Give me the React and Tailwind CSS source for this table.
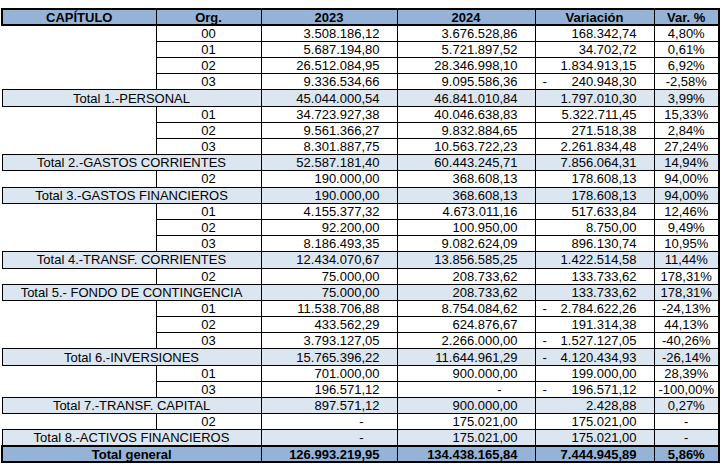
const rows = [
  { org: "00", v23: "3.508.186,12", v24: "3.676.528,86", dif: "168.342,74", pct: "4,80%" },
  { org: "01", v23: "5.687.194,80", v24: "5.721.897,52", dif: "34.702,72", pct: "0,61%" },
  { org: "02", v23: "26.512.084,95", v24: "28.346.998,10", dif: "1.834.913,15", pct: "6,92%" },
  { org: "03", v23: "9.336.534,66", v24: "9.095.586,36", dif: "-240.948,30", pct: "-2,58%" },
  { total: "Total 1.-PERSONAL", v23: "45.044.000,54", v24: "46.841.010,84", dif: "1.797.010,30", pct: "3,99%" },
  { org: "01", v23: "34.723.927,38", v24: "40.046.638,83", dif: "5.322.711,45", pct: "15,33%" },
  { org: "02", v23: "9.561.366,27", v24: "9.832.884,65", dif: "271.518,38", pct: "2,84%" },
  { org: "03", v23: "8.301.887,75", v24: "10.563.722,23", dif: "2.261.834,48", pct: "27,24%" },
  { total: "Total 2.-GASTOS CORRIENTES", v23: "52.587.181,40", v24: "60.443.245,71", dif: "7.856.064,31", pct: "14,94%" },
  { org: "02", v23: "190.000,00", v24: "368.608,13", dif: "178.608,13", pct: "94,00%" },
  { total: "Total 3.-GASTOS FINANCIEROS", v23: "190.000,00", v24: "368.608,13", dif: "178.608,13", pct: "94,00%" },
  { org: "01", v23: "4.155.377,32", v24: "4.673.011,16", dif: "517.633,84", pct: "12,46%" },
  { org: "02", v23: "92.200,00", v24: "100.950,00", dif: "8.750,00", pct: "9,49%" },
  { org: "03", v23: "8.186.493,35", v24: "9.082.624,09", dif: "896.130,74", pct: "10,95%" },
  { total: "Total 4.-TRANSF. CORRIENTES", v23: "12.434.070,67", v24: "13.856.585,25", dif: "1.422.514,58", pct: "11,44%" },
  { org: "02", v23: "75.000,00", v24: "208.733,62", dif: "133.733,62", pct: "178,31%" },
  { total: "Total 5.- FONDO DE CONTINGENCIA", v23: "75.000,00", v24: "208.733,62", dif: "133.733,62", pct: "178,31%" },
  { org: "01", v23: "11.538.706,88", v24: "8.754.084,62", dif: "-2.784.622,26", pct: "-24,13%" },
  { org: "02", v23: "433.562,29", v24: "624.876,67", dif: "191.314,38", pct: "44,13%" },
  { org: "03", v23: "3.793.127,05", v24: "2.266.000,00", dif: "-1.527.127,05", pct: "-40,26%" },
  { total: "Total 6.-INVERSIONES", v23: "15.765.396,22", v24: "11.644.961,29", dif: "-4.120.434,93", pct: "-26,14%" },
  { org: "01", v23: "701.000,00", v24: "900.000,00", dif: "199.000,00", pct: "28,39%" },
  { org: "03", v23: "196.571,12", v24: "-", dif: "-196.571,12", pct: "-100,00%" },
  { total: "Total 7.-TRANSF. CAPITAL", v23: "897.571,12", v24: "900.000,00", dif: "2.428,88", pct: "0,27%" },
  { org: "02", v23: "-", v24: "175.021,00", dif: "175.021,00", pct: "-" },
  { total: "Total 8.-ACTIVOS FINANCIEROS", v23: "-", v24: "175.021,00", dif: "175.021,00", pct: "-" },
];

const Amount = ({ value, className = "" }) => {
  if (value === "-") {
    return <td className={`border border-black text-right pr-[33px] ${className}`}>-</td>;
  }
  return <td className={`border border-black text-right pr-[17px] ${className}`}>{value}</td>;
};

const Diff = ({ value, className = "" }) => {
  // accounting format: minus sign sits on the left edge of the cell
  if (value.startsWith("-") && value !== "-") {
    return (
      <td className={`border border-black ${className}`}>
        <div className="flex justify-between pl-[7px] pr-[17px]">
          <span>-</span>
          <span>{value.slice(1)}</span>
        </div>
      </td>
    );
  }
  return <Amount value={value} className={className} />;
};

const App = () => {
  return (
    <div className="w-[720px] h-[467px] bg-white pt-[8px] pl-[1px]">
      <table className="table-fixed border-collapse w-[717px] text-[13px] leading-none text-black font-['Liberation_Sans',Arial,sans-serif]">
        <colgroup>
          <col className="w-[154px]" />
          <col className="w-[105px]" />
          <col className="w-[136px]" />
          <col className="w-[138px]" />
          <col className="w-[119px]" />
          <col className="w-[65px]" />
        </colgroup>
        <thead>
          <tr className="h-[16.2px] bg-[#95b3d7] font-bold">
            <th className="border border-black border-t-2 border-b-2 border-l-2">CAPÍTULO</th>
            <th className="border border-black border-t-2 border-b-2">Org.</th>
            <th className="border border-black border-t-2 border-b-2">2023</th>
            <th className="border border-black border-t-2 border-b-2">2024</th>
            <th className="border border-black border-t-2 border-b-2">Variación</th>
            <th className="border border-black border-t-2 border-b-2 border-r-2">Var. %</th>
          </tr>
        </thead>
        <tbody>
          {rows.map((r, i) =>
            r.total ? (
              <tr key={i} className="h-[16.2px] bg-[#dce6f1]">
                <td colSpan={2} className="border border-black text-center">
                  {r.total}
                </td>
                <Amount value={r.v23} />
                <Amount value={r.v24} />
                <Diff value={r.dif} />
                <td className="border border-black border-r-2 text-center">{r.pct}</td>
              </tr>
            ) : (
              <tr key={i} className="h-[16.2px] bg-white">
                <td className="border-0"></td>
                <td className="border border-black text-center">{r.org}</td>
                <Amount value={r.v23} />
                <Amount value={r.v24} />
                <Diff value={r.dif} />
                <td className="border border-black border-r-2 text-center">{r.pct}</td>
              </tr>
            )
          )}
          <tr className="h-[16.2px] bg-[#95b3d7] font-bold">
            <td colSpan={2} className="border border-black border-t-2 border-b-2 border-l-2 text-center">
              Total general
            </td>
            <Amount value="126.993.219,95" className="border-t-2 border-b-2" />
            <Amount value="134.438.165,84" className="border-t-2 border-b-2" />
            <Amount value="7.444.945,89" className="border-t-2 border-b-2" />
            <td className="border border-black border-t-2 border-b-2 border-r-2 text-center">5,86%</td>
          </tr>
        </tbody>
      </table>
    </div>
  );
};

export default App;
